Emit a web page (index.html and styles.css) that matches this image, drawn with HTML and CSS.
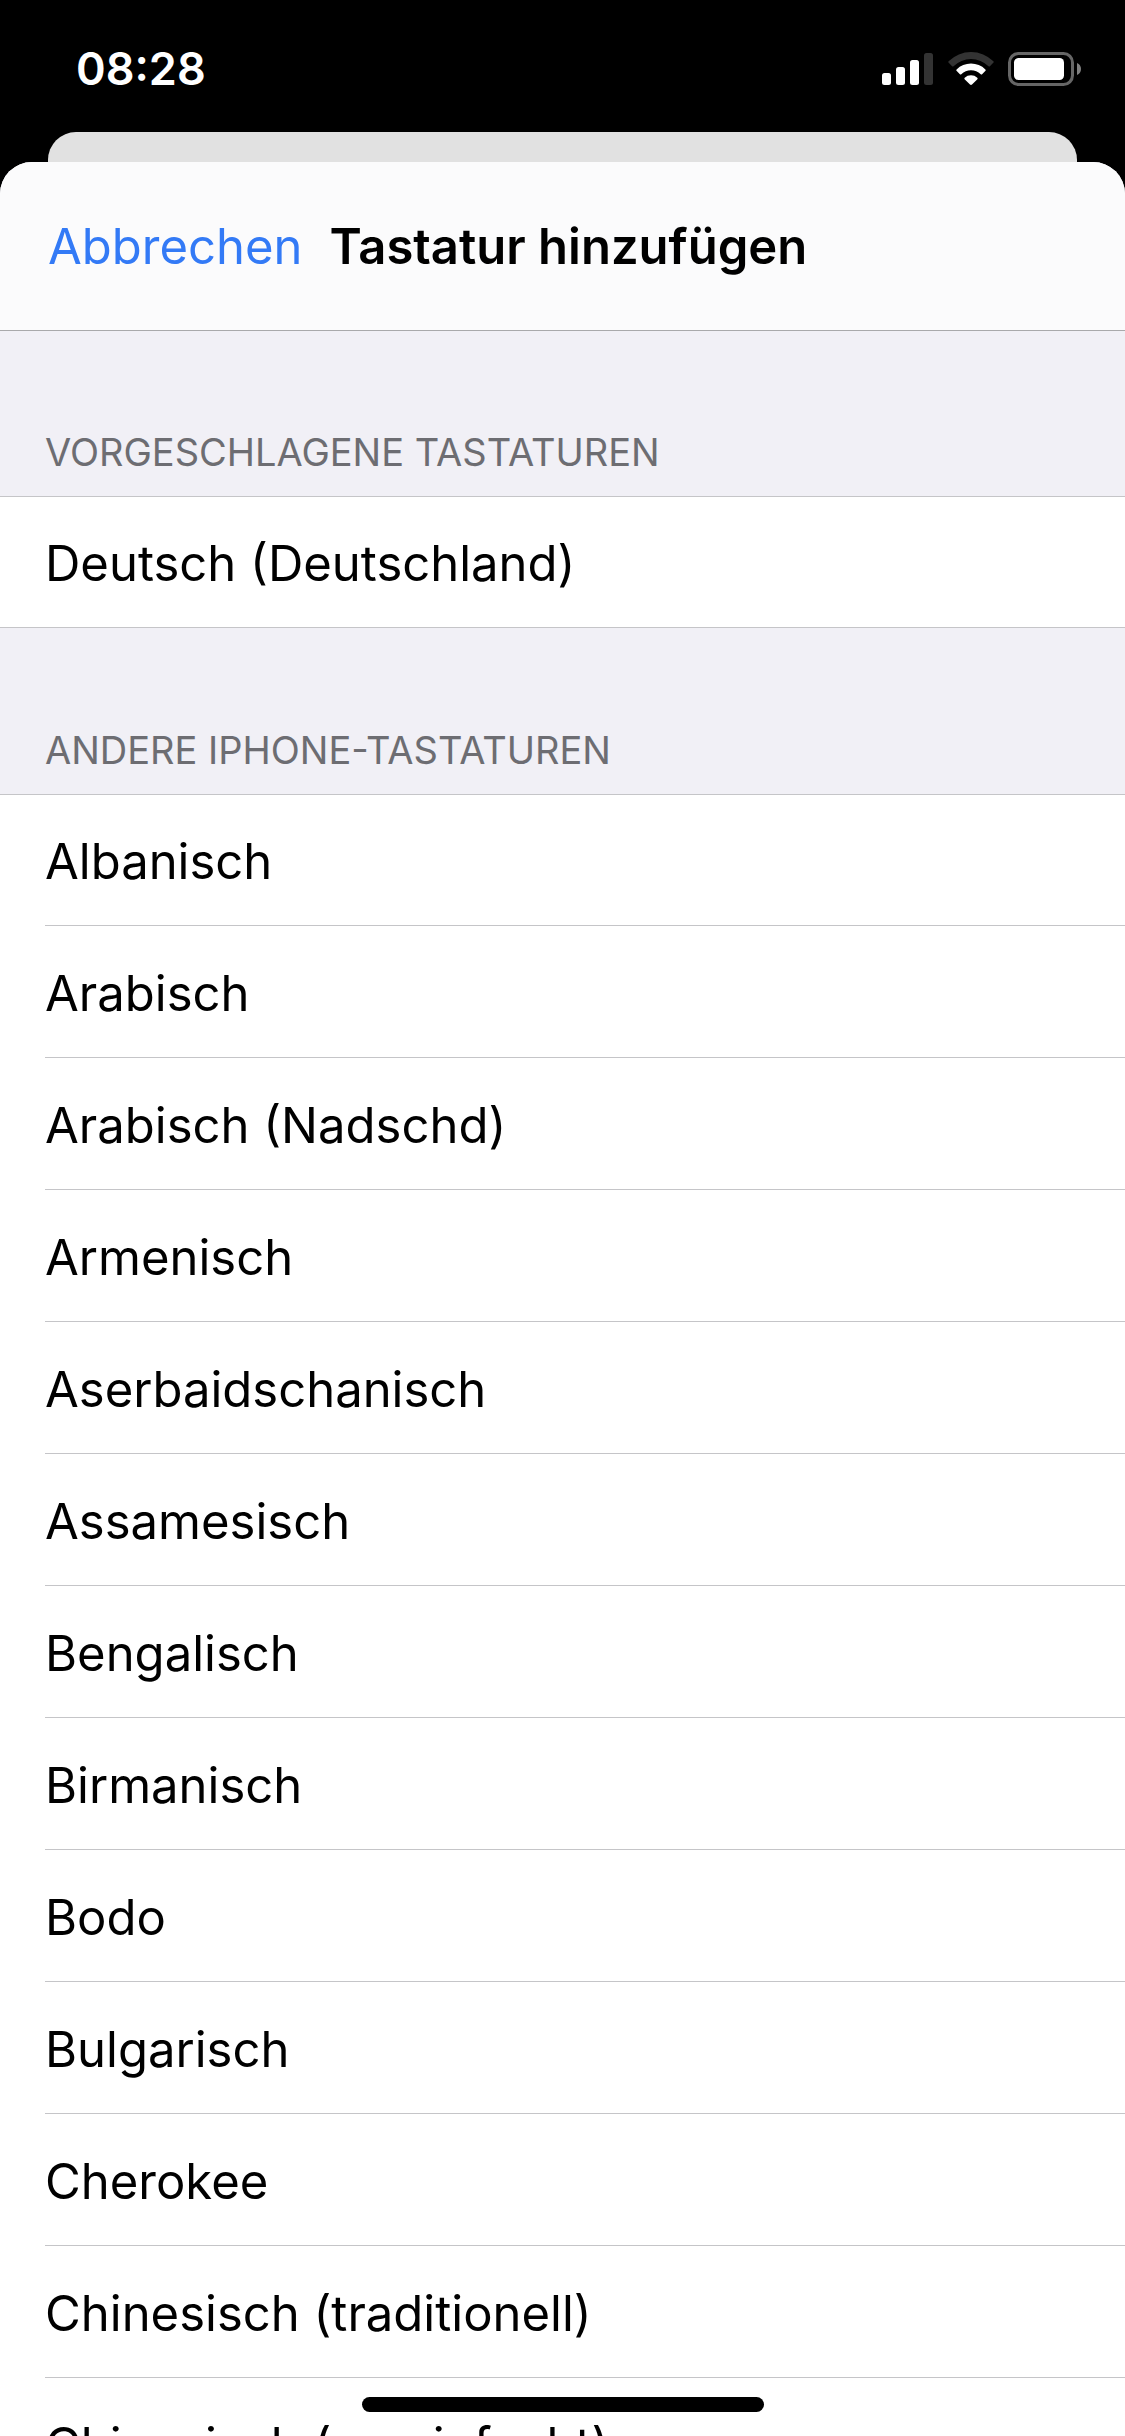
FILE: index.html
```html
<!DOCTYPE html>
<html lang="de">
<head>
  <meta charset="utf-8">
  <meta name="viewport" content="width=device-width, initial-scale=1">
  <title>Tastatur hinzufügen</title>
  <link rel="stylesheet" href="styles.css">
</head>
<body>
  <div class="screen">
    <div class="status-bar">
      <time class="clock" datetime="08:28">08:28</time>
      <div class="status-icons">
        <svg class="signal" width="52" height="34" viewBox="0 0 52 34" aria-hidden="true">
          <rect x="0" y="21" width="9" height="12" rx="2.5" fill="#fff"/>
          <rect x="14" y="15" width="9" height="18" rx="2.5" fill="#fff"/>
          <rect x="28" y="8" width="9" height="25" rx="2.5" fill="#fff"/>
          <rect x="42" y="1" width="9" height="32" rx="2.5" fill="#333"/>
        </svg>
        <svg class="wifi" width="46" height="34" viewBox="0 0 46 34" aria-hidden="true">
          <path d="M.6 9.200a32 32 0 0 1 44.8 0c.5.5.5 1 .1 1.400l-3.600 3.600c-.4.4-.9.4-1.400 0a25 25 0 0 0-35 0c-.5.4-1 .4-1.400 0L.5 10.600c-.4-.4-.4-.9.1-1.400z" fill="#333"/>
          <path d="M8.600 17.400a20.700 20.700 0 0 1 28.800 0c.5.5.5 1 .1 1.400l-3.400 3.400c-.4.4-.9.4-1.400 0a14 14 0 0 0-19.400 0c-.5.4-1 .4-1.400 0l-3.400-3.400c-.4-.4-.4-.9.1-1.400z" fill="#fff"/>
          <path d="M16.700 25.800a9.300 9.300 0 0 1 12.600 0c.5.5.5 1 .1 1.400l-5.400 5.400c-.6.600-1.400.6-2 0l-5.400-5.400c-.4-.4-.4-.9.1-1.400z" fill="#fff"/>
        </svg>
        <svg class="battery" width="74" height="34" viewBox="0 0 74 34" aria-hidden="true">
          <rect x="1.500" y="1.500" width="63" height="31" rx="9" fill="none" stroke="#666" stroke-width="3"/>
          <rect x="6" y="6" width="50" height="22" rx="4.500" fill="#fff"/>
          <path d="M69 11c2.500 1 4 3.300 4 6s-1.500 5-4 6z" fill="#808080"/>
        </svg>
      </div>
    </div>

    <div class="sheet-behind"></div>

    <main class="sheet">
      <header class="nav-bar">
        <button class="cancel" type="button">Abbrechen</button>
        <h1 class="title">Tastatur hinzufügen</h1>
      </header>

      <div class="content">
        <h2 class="section-title">Vorgeschlagene Tastaturen</h2>
        <ul class="group group-closed">
          <li class="row">Deutsch (Deutschland)</li>
        </ul>

        <h2 class="section-title">Andere iPhone-Tastaturen</h2>
        <ul class="group">
          <li class="row">Albanisch</li>
          <li class="row">Arabisch</li>
          <li class="row">Arabisch (Nadschd)</li>
          <li class="row">Armenisch</li>
          <li class="row">Aserbaidschanisch</li>
          <li class="row">Assamesisch</li>
          <li class="row">Bengalisch</li>
          <li class="row">Birmanisch</li>
          <li class="row">Bodo</li>
          <li class="row">Bulgarisch</li>
          <li class="row">Cherokee</li>
          <li class="row">Chinesisch (traditionell)</li>
          <li class="row">Chinesisch (vereinfacht)</li>
        </ul>
      </div>
    </main>

    <div class="home-indicator"></div>
  </div>
</body>
</html>
```
FILE: styles.css
```css
* {
  box-sizing: border-box;
}

body {
  margin: 0;
  background: #000;
  color: #000;
  font-family: Inter, "Liberation Sans", sans-serif;
}

.screen {
  position: relative;
  display: flex;
  flex-direction: column;
  height: 100vh;
  overflow: hidden;
}

.status-bar {
  display: flex;
  flex: none;
  align-items: center;
  justify-content: space-between;
  padding: 39px 43px 33px 76px;
  color: #fff;
}

.clock {
  font-size: 45px;
  font-weight: 600;
  line-height: 60px;
}

.status-icons {
  display: flex;
  align-items: center;
  gap: 14px;
}

.status-icons svg {
  display: block;
}

.sheet-behind {
  flex: none;
  height: 30px;
  margin: 0 48px;
  border-radius: 28px 28px 0 0;
  background: #e1e1e1;
}

.sheet {
  display: flex;
  flex: 1;
  flex-direction: column;
  min-height: 0;
  overflow: hidden;
  border-radius: 32px 32px 0 0;
  background: #f1f0f6;
}

.nav-bar {
  display: flex;
  flex: none;
  align-items: center;
  gap: 27px;
  padding: 55px 48px 53px;
  border-bottom: 1px solid #a9a9ab;
  background: #fbfbfc;
}

.cancel {
  padding: 0;
  border: 0;
  background: none;
  color: #337af6;
  font: inherit;
  font-size: 49px;
  line-height: 60px;
  cursor: pointer;
}

.title {
  margin: 0;
  font-size: 49px;
  font-weight: 600;
  line-height: 60px;
}

.content {
  flex: 1;
  min-height: 0;
  overflow-y: auto;
  scrollbar-width: none;
}

.section-title {
  margin: 0;
  padding: 97px 45px 20px;
  color: #6d6d72;
  font-size: 38px;
  font-weight: 400;
  line-height: 48px;
  text-transform: uppercase;
}

.group + .section-title {
  padding-top: 98px;
}

.group {
  margin: 0;
  padding: 0 0 0 45px;
  border-top: 1px solid #c5c5c8;
  background: #fff;
  list-style: none;
}

.group-closed {
  border-bottom: 1px solid #c5c5c8;
}

.row {
  padding: 38px 0 33px;
  border-bottom: 1px solid #c5c5c8;
  font-size: 49px;
  line-height: 60px;
}

.row:first-child {
  padding-top: 37px;
}

.group-closed .row:last-child {
  border-bottom: 0;
}

.home-indicator {
  position: absolute;
  bottom: 24px;
  left: 50%;
  width: 402px;
  height: 15px;
  border-radius: 8px;
  background: #000;
  transform: translateX(-50%);
}
```
